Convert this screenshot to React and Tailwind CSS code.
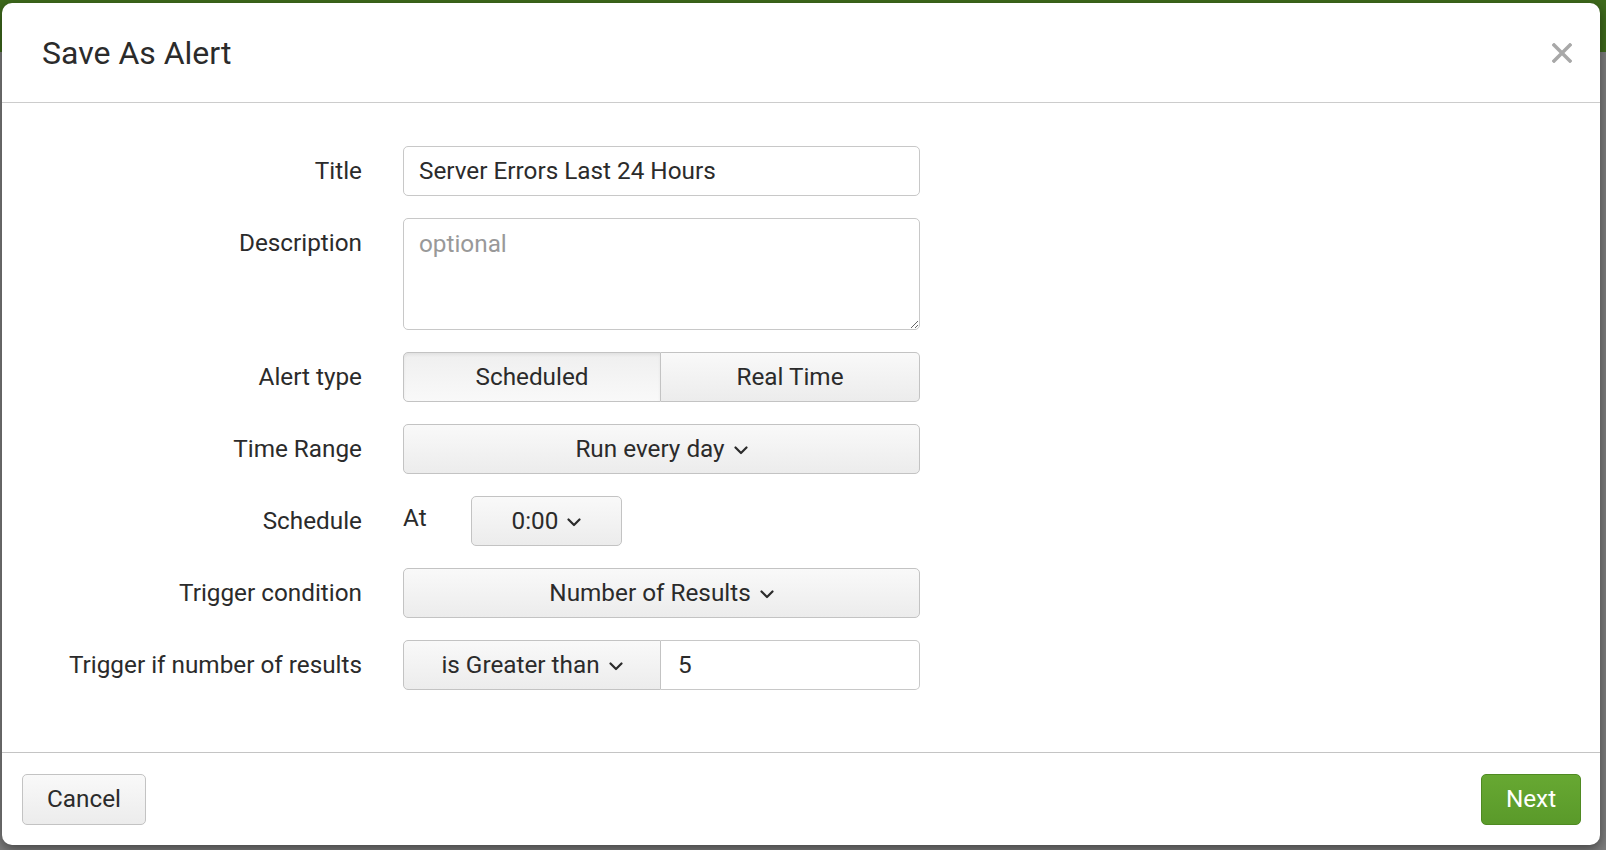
import React from "react";

function Chevron() {
  return (
    <svg width="14" height="9" viewBox="0 0 14 9" className="ml-[9px] mt-[2px]">
      <polyline points="1.5,1.5 7,7 12.5,1.5" fill="none" stroke="#2b2b2b" strokeWidth="2.2" strokeLinecap="round" strokeLinejoin="round" />
    </svg>
  );
}

const btn =
  "flex items-center justify-center border border-[#c3c3c3] bg-gradient-to-b from-[#f9f9f9] to-[#ececec] text-[#2b2b2b]";

function Label({ children }) {
  return (
    <div className="h-[50px] flex items-center justify-end text-[24.3px] text-[#2b2b2b]">
      {children}
    </div>
  );
}

export default function App() {
  return (
    <div
      className="relative w-[1606px] h-[850px] overflow-hidden bg-[#7d7d7d]"
      style={{ fontFamily: "Roboto, 'Liberation Sans', sans-serif" }}
    >
      <div className="h-[52px] bg-[#3e6a1c]" />

      {/* Modal */}
      <div className="absolute left-[2px] top-[3px] w-[1598px] h-[842px] rounded-[10px] bg-white shadow-[0_4px_12px_rgba(0,0,0,0.45)] flex flex-col">
        <div className="h-[100px] flex items-center justify-between pl-[40px] pr-[28px] border-b border-[#cccccc]">
          <h2 className="text-[32px] text-[#2b2b2b] leading-none">Save As Alert</h2>
          <svg width="20" height="20" viewBox="0 0 20 20">
            <path d="M2 2 L18 18 M18 2 L2 18" stroke="#a8a8a8" strokeWidth="3.5" strokeLinecap="square" />
          </svg>
        </div>

        <div className="flex-1 pt-[43px]">
          <div className="grid grid-cols-[360px_517px] gap-x-[41px] gap-y-[22px]">
            <Label>Title</Label>
            <div className="h-[50px] rounded-[5px] border border-[#c8c8c8] flex items-center px-[15px] text-[24.3px] text-[#2b2b2b]">
              Server Errors Last 24 Hours
            </div>

            <Label>Description</Label>
            <textarea
              placeholder="optional"
              className="h-[112px] rounded-[5px] border border-[#c8c8c8] px-[15px] pt-[7px] text-[24.3px] text-[#2b2b2b] placeholder:text-[#999] outline-none"
            />

            <Label>Alert type</Label>
            <div className="h-[50px] flex">
              <div className="w-[258px] flex items-center justify-center rounded-l-[5px] border border-[#c3c3c3] bg-gradient-to-b from-[#efefef] to-[#f9f9f9] shadow-[inset_0_2px_3px_rgba(0,0,0,0.06)] text-[24.3px] text-[#2b2b2b]">
                Scheduled
              </div>
              <div className={`${btn} flex-1 rounded-r-[5px] border-l-0 text-[24.3px]`}>
                Real Time
              </div>
            </div>

            <Label>Time Range</Label>
            <div className={`${btn} h-[50px] rounded-[5px] text-[24.3px]`}>
              Run every day
              <Chevron />
            </div>

            <Label>Schedule</Label>
            <div className="h-[50px] flex items-center">
              <span className="text-[24.3px] text-[#2b2b2b] w-[68px] -mt-[6px]">At</span>
              <div className={`${btn} w-[151px] h-[50px] rounded-[5px] text-[24.3px]`}>
                0:00
                <Chevron />
              </div>
            </div>

            <Label>Trigger condition</Label>
            <div className={`${btn} h-[50px] rounded-[5px] text-[24.3px]`}>
              Number of Results
              <Chevron />
            </div>

            <Label>Trigger if number of results</Label>
            <div className="h-[50px] flex">
              <div className={`${btn} w-[258px] rounded-l-[5px] text-[24.3px]`}>
                is Greater than
                <Chevron />
              </div>
              <div className="flex-1 flex items-center rounded-r-[5px] border border-l-0 border-[#c8c8c8] pl-[17px] text-[24.3px] text-[#2b2b2b]">
                5
              </div>
            </div>
          </div>
        </div>

        <div className="h-[93px] border-t border-[#c4c4c4] flex items-center justify-between pl-[20px] pr-[19px]">
          <button className={`${btn} w-[124px] h-[51px] rounded-[5px] text-[24.3px]`}>
            Cancel
          </button>
          <button className="w-[100px] h-[51px] rounded-[5px] border border-[#4f8a22] bg-gradient-to-b from-[#67a832] to-[#5a9a2a] text-white text-[24.3px] flex items-center justify-center">
            Next
          </button>
        </div>
      </div>
    </div>
  );
}
